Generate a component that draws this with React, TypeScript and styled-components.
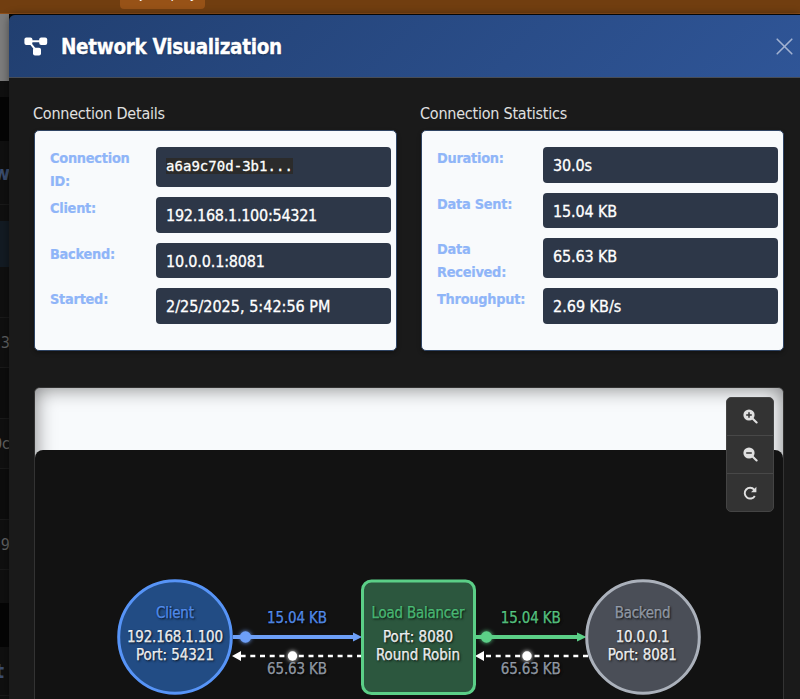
import React from "react";
import styled, { createGlobalStyle } from "styled-components";
import { FaRocket } from "react-icons/fa";

const Global = createGlobalStyle`
  * { box-sizing: border-box; }
  html, body { margin: 0; width: 800px; height: 699px; overflow: hidden; background: #0a0a0a; }
  body { font-family: "DejaVu Sans Condensed", "DejaVu Sans", sans-serif; font-stretch: condensed; }
`;

const Page = styled.div`
  position: relative;
  width: 800px;
  height: 699px;
  overflow: hidden;
  background: #080808;
`;

const TopBar = styled.div`
  height: 14px;
  background: #713e10;
  border-bottom: 1px solid #8f501b;
  padding-left: 120px;
`;

const BarButton = styled.div`
  width: 85px;
  height: 9px;
  background: #975217;
  border-radius: 0 0 4px 4px;
  overflow: hidden;
  color: #fff;
  font-size: 14px;
  line-height: 16px;
  display: flex;
  align-items: flex-end;
  padding-left: 14px;
  gap: 6px;

  svg { margin-bottom: 8px; flex: none; }
`;

const BarLabel = styled.span`
  margin-bottom: 8px;
`;

const Strip = styled.div<{ $h: number; $bg: string; $line?: boolean }>`
  width: 9px;
  height: ${(p) => p.$h}px;
  background: ${(p) => p.$bg};
  border-bottom: ${(p) => (p.$line ? "1px solid #1a1a1a" : "none")};
  overflow: hidden;
  display: flex;
  align-items: center;
  justify-content: flex-end;
`;

const StripText = styled.span<{ $accent?: boolean; $shift?: number }>`
  color: ${(p) => (p.$accent ? "#3b4d6e" : "#626262")};
  font-size: ${(p) => (p.$accent ? 20 : 16)}px;
  font-weight: ${(p) => (p.$accent ? 700 : 400)};
  margin-right: ${(p) => p.$shift ?? 0}px;
`;

const Modal = styled.section`
  position: absolute;
  left: 9px;
  top: 15px;
  width: 791px;
  height: 684px;
  background: #1a1a1a;
  border-radius: 6px 0 0 0;
  box-shadow: 0 0 8px rgba(0, 0, 0, 0.45);
  overflow: hidden;
`;

const Header = styled.header`
  height: 63px;
  background: linear-gradient(135deg, #213f70, #2f5597);
  border-bottom: 1px solid #484d56;
  display: flex;
  align-items: center;
  padding: 0 7px 0 15px;

  svg { flex: none; }
`;

const Title = styled.h1`
  margin: 2px 0 0 12px;
  flex: 1;
  color: #fff;
  font-size: 20.5px;
  line-height: 28px;
  font-weight: 700;
  letter-spacing: -0.33px;
  -webkit-text-stroke: 0.3px #fff;
  text-shadow: 0 1px 2px rgba(0, 0, 0, 0.35);
`;

const Columns = styled.div`
  display: grid;
  grid-template-columns: 363px 363px;
  column-gap: 24px;
  padding: 25px 0 0 25px;
`;

const Heading = styled.h2`
  margin: 0 0 6px -1px;
  height: 21px;
  line-height: 21px;
  color: #e0e0e0;
  font-size: 16px;
  font-weight: 400;
  letter-spacing: -0.23px;
`;

const Card = styled.div`
  height: 221px;
  background: #f8fafc;
  border: 1px solid #2f4463;
  border-radius: 5px;
  padding: 16px 5px 0 15px;
  display: flex;
  flex-direction: column;
  gap: 10px;
  box-shadow: 0 2px 4px rgba(0, 0, 0, 0.3);
`;

const Row = styled.div<{ $h: number }>`
  display: grid;
  grid-template-columns: 90px 235px;
  grid-template-rows: 100%;
  column-gap: 16px;
  height: ${(p) => p.$h}px;
`;

const Label = styled.div`
  color: #8fb5f8;
  font-size: 14.4px;
  font-weight: 700;
  line-height: 23px;
  letter-spacing: -0.25px;
  -webkit-text-stroke: 0.2px #8fb5f8;
`;

const Value = styled.div<{ $ls: number }>`
  background: #2d3748;
  border-radius: 4px;
  padding: 8px 10px 0;
  color: #fff;
  font-size: 16px;
  line-height: 22px;
  letter-spacing: ${(p) => p.$ls}px;
  -webkit-text-stroke: 0.3px #fff;
  white-space: nowrap;
`;

const Code = styled.code`
  font-family: "DejaVu Sans Mono", monospace;
  font-size: 14px;
  background: #2b2b2b;
`;

const Diagram = styled.div`
  position: relative;
  margin: 36px 0 0 25px;
  width: 750px;
  height: 340px;
  border: 1px solid #333;
  border-radius: 6px;
  background: #f8fafc;
  box-shadow: inset 0 0 20px rgba(0, 0, 0, 0.5);
  padding-top: 62px;
`;

const Canvas = styled.svg`
  display: block;
  width: 748px;
  height: 260px;
  background: #121212;
  border-radius: 8px;
  font-family: "DejaVu Sans Condensed", "DejaVu Sans", sans-serif;
`;

const NodeText = styled.text`
  font-size: 15px;
  text-anchor: middle;
  text-shadow: 1px 1px 2px rgba(0, 0, 0, 0.7);
  stroke-width: 0.25px;
`;

const Zoom = styled.div`
  position: absolute;
  right: 9px;
  top: 9px;
  width: 48px;
  height: 115px;
  background: #333;
  border: 1px solid #444;
  border-radius: 5px;
  display: grid;
  grid-template-rows: 38px 38px 37px;
`;

const ZoomButton = styled.button`
  border: 0;
  border-bottom: 1px solid #484848;
  background: none;
  padding: 0;
  color: #e0e0e0;
  display: flex;
  align-items: center;
  justify-content: center;
  &:last-child { border-bottom: 0; }
`;

type InfoRow = { label: string; value: React.ReactNode; h: number; ls: number };

const details: InfoRow[] = [
  { label: "Connection ID:", value: <Code>a6a9c70d-3b1...</Code>, h: 40, ls: 0.03 },
  { label: "Client:", value: "192.168.1.100:54321", h: 36, ls: -0.26 },
  { label: "Backend:", value: "10.0.0.1:8081", h: 35, ls: -0.17 },
  { label: "Started:", value: "2/25/2025, 5:42:56 PM", h: 36, ls: 0.02 },
];
const stats: InfoRow[] = [
  { label: "Duration:", value: "30.0s", h: 36, ls: -0.15 },
  { label: "Data Sent:", value: "15.04 KB", h: 35, ls: -0.12 },
  { label: "Data Received:", value: "65.63 KB", h: 40, ls: -0.12 },
  { label: "Throughput:", value: "2.69 KB/s", h: 36, ls: 0 },
];

const InfoPanel = ({ title, rows }: { title: string; rows: InfoRow[] }) => (
  <div>
    <Heading>{title}</Heading>
    <Card>
      {rows.map((r) => (
        <Row key={r.label} $h={r.h}>
          <Label>{r.label}</Label>
          <Value $ls={r.ls}>{r.value}</Value>
        </Row>
      ))}
    </Card>
  </div>
);

const T = ({ x, y, w, fill, children }: { x: number; y: number; w: number; fill: string; children: string }) => (
  <NodeText x={x} y={y} textLength={w} lengthAdjust="spacing" fill={fill} stroke={fill}>{children}</NodeText>
);

const NetworkIcon = () => (
  <svg width="25" height="19" viewBox="0 0 25 19" fill="#fff">
    <rect x="0.4" y="0.6" width="8" height="7.4" rx="2" />
    <rect x="15.2" y="0.6" width="8" height="7.4" rx="2" />
    <rect x="9" y="10.8" width="8" height="7.8" rx="2" />
    <path d="M7 4.3h9M6 5.8l5 6.4" stroke="#fff" strokeWidth="2" />
  </svg>
);

const LensIcon = ({ plus }: { plus?: boolean }) => (
  <svg width="15" height="15" viewBox="0 0 15 15" fill="none">
    <path d="M9 9l4.6 4.4" stroke="#e0e0e0" strokeWidth="2.1" strokeLinecap="round" />
    <circle cx="6" cy="6" r="5.6" fill="#e0e0e0" />
    <path d={plus ? "M3.2 6h5.6M6 3.2v5.6" : "M3.2 6h5.6"} stroke="#333" strokeWidth="1.5" />
  </svg>
);

export default function App() {
  return (
    <Page>
      <Global />
      <TopBar><BarButton><FaRocket size={13} /><BarLabel>Deploy</BarLabel></BarButton></TopBar>
      <Strip $h={67} $bg="#7c7c7c" />
      <Strip $h={16} $bg="#101010" />
      <Strip $h={44} $bg="#050505" />
      <Strip $h={64} $bg="#101010" $line><StripText $accent $shift={-1}>w</StripText></Strip>
      <Strip $h={16} $bg="#101010" />
      <Strip $h={46} $bg="#131b23" />
      <Strip $h={51} $bg="#101010" $line />
      <Strip $h={50} $bg="#101010" $line><StripText $shift={-1}>13</StripText></Strip>
      <Strip $h={51} $bg="#0d0d0d" $line />
      <Strip $h={50} $bg="#101010" $line><StripText $shift={-1}>0c</StripText></Strip>
      <Strip $h={51} $bg="#0d0d0d" $line />
      <Strip $h={50} $bg="#101010" $line><StripText $shift={-1}>59</StripText></Strip>
      <Strip $h={33} $bg="#101010" />
      <Strip $h={44} $bg="#050505" />
      <Strip $h={49} $bg="#101010" $line><StripText $accent $shift={5}>t</StripText></Strip>
      <Strip $h={4} $bg="#101010" />
      <Modal>
        <Header>
          <NetworkIcon />
          <Title>Network Visualization</Title>
          <svg width="17" height="17" viewBox="0 0 17 17" stroke="#a2b2d1" strokeWidth="1.6" strokeLinecap="round">
            <path d="M1.2 1.2l14.6 14.6M15.8 1.2L1.2 15.8" />
          </svg>
        </Header>
        <Columns>
          <InfoPanel title="Connection Details" rows={details} />
          <InfoPanel title="Connection Statistics" rows={stats} />
        </Columns>
        <Diagram>
          <Canvas viewBox="35 450 748 260">
            <defs>
              <filter id="glow" x="-100%" y="-100%" width="300%" height="300%">
                <feGaussianBlur stdDeviation="2.2" result="b" />
                <feMerge><feMergeNode in="b" /><feMergeNode in="SourceGraphic" /></feMerge>
              </filter>
            </defs>
            <path d="M233 637H354" stroke="#6d9ff7" strokeWidth="4" />
            <path d="M353 632.4l9 4.6-9 4.6z" fill="#6d9ff7" />
            <path d="M476 637H580" stroke="#5bcf87" strokeWidth="4" />
            <path d="M577 632.4l9.5 4.6-9.5 4.6z" fill="#5bcf87" />
            <path d="M362 656H238M588 656H483" stroke="#fff" strokeWidth="2.7" strokeDasharray="5 4.7" />
            <path d="M241 651l-9 5 9 5zM484 651l-9 5 9 5z" fill="#fff" />
            <circle cx="175" cy="637" r="56.3" fill="#224c84" stroke="#5794f7" strokeWidth="3" />
            <rect x="362.5" y="581" width="112" height="112.5" rx="9" fill="#2c573e" stroke="#5bcf87" strokeWidth="3" />
            <circle cx="643" cy="637" r="56.3" fill="#4a4e57" stroke="#abb1bb" strokeWidth="3" />
            <g filter="url(#glow)">
              <circle cx="245.5" cy="637" r="5.7" fill="#6d9ff7" />
              <circle cx="486.5" cy="637" r="5.7" fill="#5bcf87" />
              <circle cx="292.5" cy="656" r="4.7" fill="#fff" />
              <circle cx="527" cy="656" r="4.7" fill="#fff" />
            </g>
            <T x={175} y={618} w={38} fill="#5794f7">Client</T>
            <T x={175} y={642} w={96} fill="#fff">192.168.1.100</T>
            <T x={175} y={660} w={78} fill="#fff">Port: 54321</T>
            <T x={297} y={623} w={60} fill="#5794f7">15.04 KB</T>
            <T x={297} y={674} w={60} fill="#9ca3af">65.63 KB</T>
            <T x={418} y={618} w={93} fill="#4fc57c">Load Balancer</T>
            <T x={418} y={642} w={70} fill="#fff">Port: 8080</T>
            <T x={418} y={660} w={84} fill="#fff">Round Robin</T>
            <T x={530.7} y={623} w={60} fill="#5bcf87">15.04 KB</T>
            <T x={530.7} y={674} w={60} fill="#9ca3af">65.63 KB</T>
            <T x={642.7} y={618} w={56} fill="#9ca3af">Backend</T>
            <T x={642.7} y={642} w={54} fill="#fff">10.0.0.1</T>
            <T x={642.3} y={660} w={69} fill="#fff">Port: 8081</T>
          </Canvas>
          <Zoom>
            <ZoomButton aria-label="Zoom in"><LensIcon plus /></ZoomButton>
            <ZoomButton aria-label="Zoom out"><LensIcon /></ZoomButton>
            <ZoomButton aria-label="Reset">
              <svg width="14" height="14" viewBox="0 0 14 14" fill="none" stroke="#e0e0e0" strokeWidth="1.9">
                <path d="M11.2 3.6A5.4 5.4 0 1 0 11.8 9.9" />
                <path d="M13.4 0.8v5.4H8z" fill="#e0e0e0" stroke="none" />
              </svg>
            </ZoomButton>
          </Zoom>
        </Diagram>
      </Modal>
    </Page>
  );
}
